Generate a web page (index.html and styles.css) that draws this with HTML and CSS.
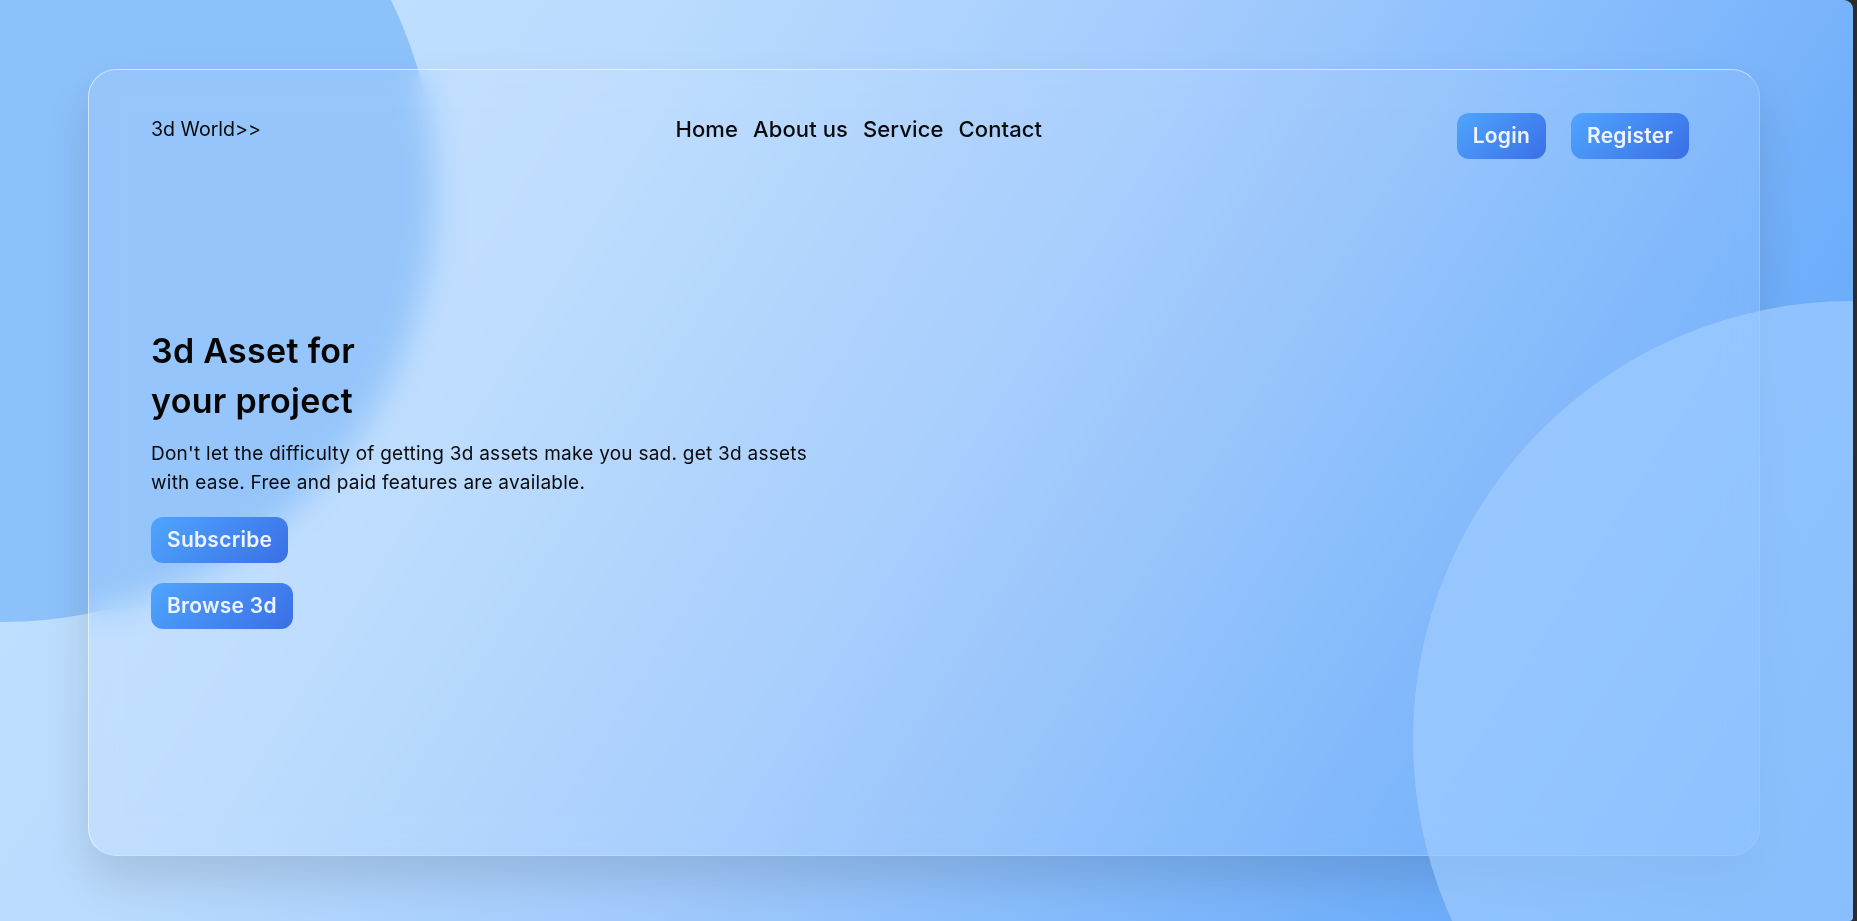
FILE: index.html
```html
<!DOCTYPE html>
<html lang="en">
<head>
<meta charset="utf-8">
<title>3d World</title>
<link rel="stylesheet" href="styles.css">
</head>
<body>
<div class="page">
  <div class="circle circle-back"></div>
  <div class="card">
    <header class="header">
      <div class="logo">3d World&gt;&gt;</div>
      <nav class="nav">
        <a href="#" class="nav-link">Home</a>
        <a href="#" class="nav-link">About us</a>
        <a href="#" class="nav-link">Service</a>
        <a href="#" class="nav-link">Contact</a>
      </nav>
      <div class="auth">
        <button class="btn">Login</button>
        <button class="btn">Register</button>
      </div>
    </header>
    <section class="hero">
      <h1 class="hero-title">3d Asset for<br>your project</h1>
      <p class="hero-text">Don't let the difficulty of getting 3d assets make you sad. get 3d assets<br>with ease. Free and paid features are available.</p>
      <div class="actions">
        <button class="btn">Subscribe</button>
        <button class="btn">Browse 3d</button>
      </div>
    </section>
  </div>
  <div class="circle circle-front"></div>
</div>
</body>
</html>
```
FILE: styles.css
```css
* { box-sizing: border-box; }
html, body { margin: 0; padding: 0; }
body {
  background: #2c2c2c;
  font-family: Inter, "Open Sans", sans-serif;
  color: #0a0a0a;
  overflow: hidden;
}
.page {
  position: relative;
  width: 1853px;
  height: 921px;
  overflow: hidden;
  border-top-right-radius: 9px;
  border-bottom-right-radius: 4px;
  background: linear-gradient(122deg, #c4e3ff 0%, #badbfe 28%, #a2cbfd 50%, #74b1fb 78%, #55a0f8 100%);
  padding: 69px 0 0 88px;
}
.circle {
  position: absolute;
  border-radius: 50%;
}
.circle-back {
  left: -429px;
  top: -242px;
  width: 864px;
  height: 864px;
  background: #8dc1fa;
}
.circle-front {
  left: 1413px;
  top: 301px;
  width: 878px;
  height: 878px;
  background: rgba(160, 205, 255, 0.68);
}
.card {
  position: relative;
  width: 1672px;
  height: 787px;
  border-radius: 28px;
  background: rgba(255, 255, 255, 0.08);
  backdrop-filter: blur(16px);
  border-top: 1px solid rgba(255, 255, 255, 0.55);
  border-left: 1px solid rgba(255, 255, 255, 0.55);
  border-right: 1px solid rgba(255, 255, 255, 0.2);
  border-bottom: 1px solid rgba(255, 255, 255, 0.2);
  box-shadow: 0 25px 45px rgba(0, 0, 0, 0.12);
  padding: 44px 70px 0 62px;
}
.header {
  display: flex;
  justify-content: space-between;
  align-items: flex-start;
}
.logo {
  font-size: 19.6px;
  line-height: 30px;
  font-weight: 400;
}
.nav {
  display: flex;
  gap: 15px;
}
.nav-link {
  font-size: 22px;
  line-height: 30px;
  font-weight: 500;
  letter-spacing: 0.1px;
  color: #0a0a0a;
  text-decoration: none;
}
.auth {
  display: flex;
  gap: 25px;
  margin-top: -1px;
}
.btn {
  font-family: inherit;
  font-size: 21px;
  line-height: 30px;
  font-weight: 600;
  letter-spacing: 0.25px;
  color: #eef4ff;
  border: none;
  border-radius: 12px;
  padding: 8px 16px;
  background: linear-gradient(135deg, #4fa5fe 0%, #3a6fe6 100%);
  cursor: pointer;
}
.hero {
  margin-top: 167px;
}
.hero-title {
  margin: 0;
  font-size: 34px;
  line-height: 50px;
  font-weight: 600;
  letter-spacing: 0.3px;
  color: #050505;
}
.hero-text {
  margin: 13px 0 0;
  font-size: 19px;
  line-height: 29px;
  letter-spacing: 0.25px;
  color: #0a0a0a;
}
.actions {
  margin-top: 20px;
  display: flex;
  flex-direction: column;
  align-items: flex-start;
  gap: 20px;
}
```
